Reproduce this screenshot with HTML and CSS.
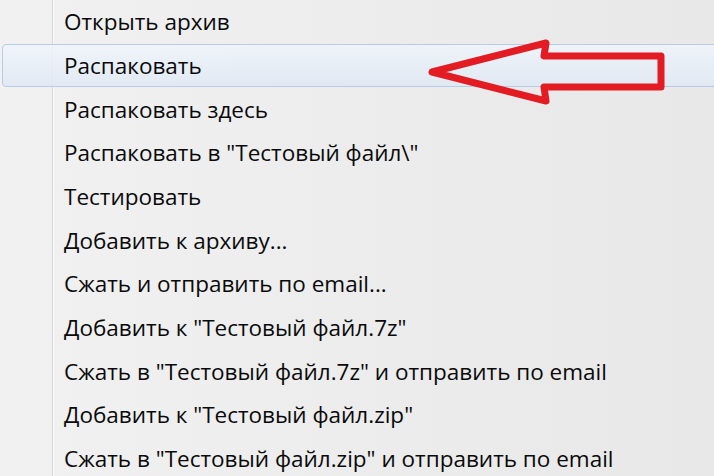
FILE: index.html
```html
<!DOCTYPE html>
<html lang="ru">
<head>
<meta charset="utf-8">
<link rel="stylesheet" href="styles.css">
</head>
<body>
<div class="menu">
  <div class="item">Открыть архив</div>
  <div class="item active">Распаковать</div>
  <div class="item">Распаковать здесь</div>
  <div class="item">Распаковать в "Тестовый файл\"</div>
  <div class="item">Тестировать</div>
  <div class="item">Добавить к архиву...</div>
  <div class="item">Сжать и отправить по email...</div>
  <div class="item">Добавить к "Тестовый файл.7z"</div>
  <div class="item">Сжать в "Тестовый файл.7z" и отправить по email</div>
  <div class="item">Добавить к "Тестовый файл.zip"</div>
  <div class="item">Сжать в "Тестовый файл.zip" и отправить по email</div>
  <svg class="arrow" width="250" height="80" viewBox="420 35 250 80">
    <polygon points="432,72 546,43 544,56 661,56 661,87 544,87 546,101" fill="none" stroke="#e31b23" stroke-width="7" stroke-linejoin="round"/>
  </svg>
</div>
</body>
</html>
```
FILE: styles.css
```css
html, body {
  margin: 0;
  padding: 0;
}
body {
  width: 714px;
  height: 476px;
  overflow: hidden;
  background: #ececec;
}
.menu {
  position: relative;
  display: flex;
  flex-direction: column;
  width: 714px;
  height: 476px;
  background:
    linear-gradient(to right, transparent 52px, #d6d6d6 52px, #d6d6d6 53px, #fbfbfb 53px, #fbfbfb 54px, transparent 54px),
    linear-gradient(to right, #f1f1f1, #e8e8e8);
  font-family: "Open Sans", "Noto Sans", sans-serif;
  font-size: 22.5px;
  color: #0a0a0a;
}
.item {
  height: 43.67px;
  flex: none;
  display: flex;
  align-items: center;
  padding-left: 64px;
  box-sizing: border-box;
  white-space: nowrap;
}
.item.active {
  margin-left: 2px;
  margin-right: -10px;
  padding-left: 61px;
  border: 1px solid #b7cce6;
  border-radius: 4px;
  background: linear-gradient(to bottom, rgba(240,245,251,0.85), rgba(222,232,244,0.85));
}
.arrow {
  position: absolute;
  left: 420px;
  top: 35px;
}
```
